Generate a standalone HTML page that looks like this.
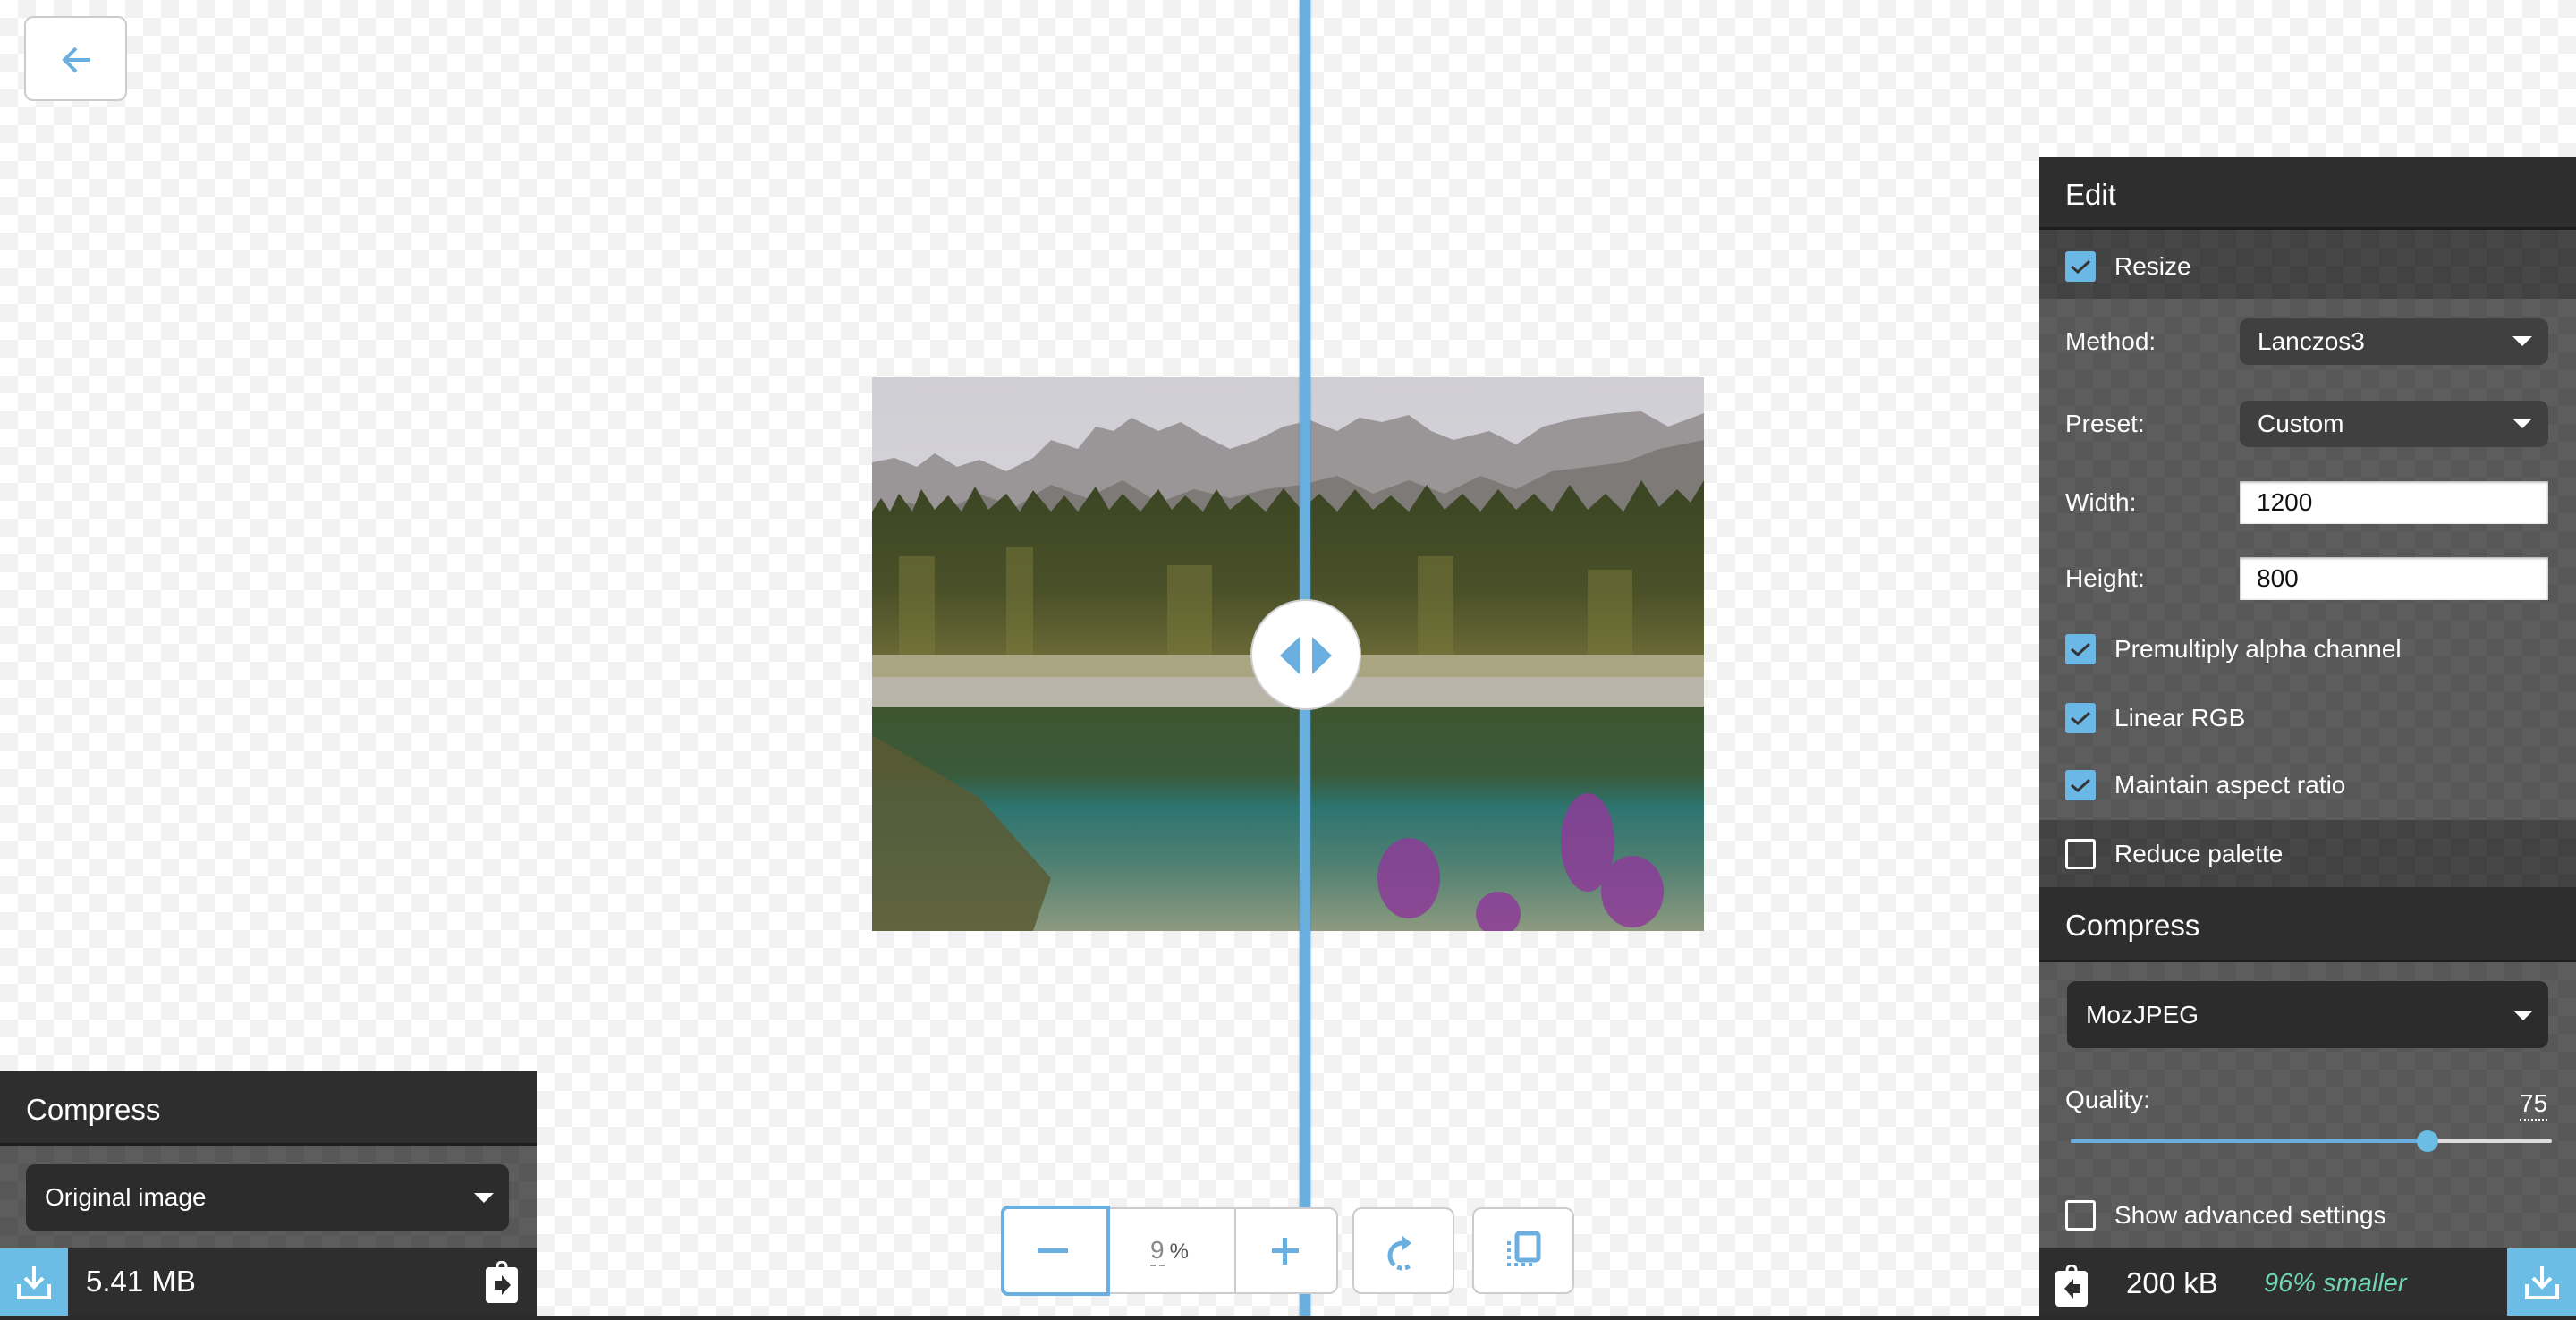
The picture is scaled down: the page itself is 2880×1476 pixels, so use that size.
<!DOCTYPE html>
<html><head><meta charset="utf-8"><style>
*{box-sizing:border-box;margin:0;padding:0}
body{width:2880px;height:1476px;overflow:hidden;position:relative;font-family:"Liberation Sans",sans-serif;
background:repeating-conic-gradient(#f2f2f2 0 25%,#fff 0 50%) 0 0/40px 40px;}
.abs{position:absolute}
.btn{position:absolute;background:#fff;border:2px solid #ccc;border-radius:10px}
.panel{position:absolute;color:#fff}
.hdr{background:#2e2e2e;border-bottom:3px solid #1e1e1e;font-size:33px;position:absolute;left:0;right:0}
.light{position:absolute;left:0;right:0;background:repeating-conic-gradient(#5d5d5d 0 25%,#575757 0 50%) 0 0/40px 40px}
.dark{position:absolute;left:0;right:0;background:repeating-conic-gradient(#474747 0 25%,#424242 0 50%) 0 0/40px 40px}
.t{position:absolute;font-size:28px;line-height:1;white-space:nowrap}
.cb{position:absolute;width:34px;height:34px;border-radius:3px;background:#6bb8e6}
.cb svg{position:absolute;left:5px;top:8px}
.cbo{position:absolute;width:34px;height:34px;border:3px solid #fff;border-radius:3px}
.sel{position:absolute;border-radius:10px}
.arr{position:absolute;width:0;height:0;border-left:11px solid transparent;border-right:11px solid transparent;border-top:11px solid #fff}
.inp{position:absolute;background:#fff;box-shadow:inset 0 1px 3px #999;color:#111}
</style></head><body>

<div class="btn" style="left:27px;top:18px;width:115px;height:95px">
<svg class="abs" style="left:40px;top:30px" width="34" height="34" viewBox="0 0 34 34"><path d="M32 17H3M16 4L3 17l13 13" fill="none" stroke="#6aafdf" stroke-width="4"/></svg></div>

<!-- image -->
<svg class="abs" style="left:975px;top:422px" width="930" height="619" viewBox="0 0 930 619">
<defs>
<linearGradient id="sky" x1="0" y1="0" x2="0" y2="1"><stop offset="0" stop-color="#cfced4"/><stop offset="1" stop-color="#e4e2e6"/></linearGradient>
<linearGradient id="wat" x1="0" y1="0" x2="0" y2="1"><stop offset="0" stop-color="#3e5530"/><stop offset=".3" stop-color="#3a5a3a"/><stop offset=".45" stop-color="#2d7470"/><stop offset=".7" stop-color="#4f8072"/><stop offset="1" stop-color="#8d9a80"/></linearGradient>
<linearGradient id="for" x1="0" y1="0" x2="0" y2="1"><stop offset="0" stop-color="#3a4524"/><stop offset=".6" stop-color="#4a5028"/><stop offset="1" stop-color="#6e6c38"/></linearGradient>
</defs>
<rect width="930" height="619" fill="url(#sky)"/>
<path d="M0 95 L25 90 50 100 70 85 95 100 120 92 150 105 180 90 200 70 230 80 250 55 270 60 290 45 320 60 345 50 370 65 400 80 430 70 460 55 490 48 520 60 545 45 570 50 600 42 625 60 650 70 690 60 720 75 750 55 790 45 830 40 860 38 890 55 930 40 L930 220 L0 220Z" fill="#9a9596"/>
<path d="M0 160 L40 140 80 150 120 130 160 145 200 120 240 135 280 115 320 140 360 125 400 135 440 125 480 120 520 110 560 130 600 115 640 130 680 110 720 125 760 105 800 100 840 95 880 80 930 70 L930 220 L0 220Z" fill="#7d7a78"/>
<path d="M0 150 L10 135 20 150 30 130 45 150 55 125 70 148 85 132 100 150 115 122 130 148 150 130 165 150 180 126 200 150 215 132 230 150 250 122 265 148 280 130 300 150 320 125 335 148 350 132 370 150 385 125 400 148 420 132 440 150 460 124 480 148 500 130 520 150 540 125 560 148 580 132 600 150 620 120 640 148 660 130 680 150 700 125 720 148 740 130 760 150 780 120 800 148 820 130 840 150 860 115 880 145 900 125 915 140 930 115 L930 320 L0 320Z" fill="url(#for)"/>
<g fill="#7a7a3a" opacity=".5"><rect x="30" y="200" width="40" height="110"/><rect x="150" y="190" width="30" height="120"/><rect x="330" y="210" width="50" height="100"/><rect x="610" y="200" width="40" height="110"/><rect x="800" y="215" width="50" height="95"/></g>
<rect x="0" y="310" width="930" height="30" fill="#a9a582"/>
<rect x="0" y="335" width="930" height="35" fill="#b8b5a8"/>
<rect x="0" y="368" width="930" height="251" fill="url(#wat)"/>
<path d="M0 400 L120 470 200 560 180 619 0 619Z" fill="#5a5a34" opacity=".85"/>
<g fill="#8d3c98" opacity=".85"><ellipse cx="600" cy="560" rx="35" ry="45"/><ellipse cx="800" cy="520" rx="30" ry="55"/><ellipse cx="850" cy="575" rx="35" ry="40"/><ellipse cx="700" cy="600" rx="25" ry="25"/></g>
</svg>

<!-- divider -->
<div class="abs" style="left:1453px;top:0;width:12px;height:1476px;background:#68aede;box-shadow:0 0 2px #4a8ec0"></div>
<div class="abs" style="left:1398px;top:670px;width:124px;height:124px;border-radius:50%;background:#fff;border:2px solid #ccc">
<svg class="abs" style="left:27px;top:28px" width="68" height="66" viewBox="0 0 68 66"><path d="M22 0V42L0 21Z M36 0V42L58 21Z" fill="#6aafdf" transform="translate(4 12)"/></svg></div>

<!-- zoom controls -->
<div class="btn" style="left:1121px;top:1350px;width:375px;height:97px"></div>
<div class="abs" style="left:1119px;top:1348px;width:122px;height:101px;border:4px solid #6aafdf;border-radius:8px 0 0 8px;background:#fff"></div>
<div class="abs" style="left:1160px;top:1396px;width:34px;height:5px;background:#6aafdf"></div>
<div class="abs" style="left:1380px;top:1352px;width:2px;height:93px;background:#ccc"></div>
<div class="abs" style="left:1286px;top:1382px;font-size:28px;color:#888">9<span style="color:#555;font-size:24px;margin-left:6px">%</span></div>
<div class="abs" style="left:1286px;top:1414px;width:16px;border-top:2px dashed #999"></div>
<div class="abs" style="left:1422px;top:1396px;width:30px;height:5px;background:#6aafdf"></div>
<div class="abs" style="left:1434px;top:1384px;width:5px;height:30px;background:#6aafdf"></div>
<div class="btn" style="left:1512px;top:1350px;width:114px;height:97px">
<svg class="abs" style="left:36px;top:26px" width="40" height="44" viewBox="0 0 40 44"><path d="M18 12A14 14 0 1 0 32 26" fill="none" stroke="#6aafdf" stroke-width="5" stroke-dasharray="34 4 5 4 5"/><path d="M18 4L28 12 18 20Z" fill="#6aafdf"/></svg></div>
<div class="btn" style="left:1646px;top:1350px;width:114px;height:97px">
<svg class="abs" style="left:36px;top:24px" width="40" height="44" viewBox="0 0 40 44"><rect x="12" y="3" width="24" height="30" rx="3" fill="none" stroke="#6aafdf" stroke-width="5"/><path d="M3 12V38H30" fill="none" stroke="#6aafdf" stroke-width="4" stroke-dasharray="4 4"/></svg></div>

<!-- bottom line -->
<div class="abs" style="left:0;top:1471px;width:2880px;height:5px;background:#2a2a2a"></div>

<!-- left panel -->
<div class="panel" style="left:0;top:1198px;width:600px;height:273px">
<div class="hdr" style="top:0;height:83px"><span class="abs" style="left:29px;top:24px">Compress</span></div>
<div class="light" style="top:83px;height:115px"></div>
<div class="sel" style="left:29px;top:104px;width:540px;height:74px;background:#2c2c2c"><span class="t" style="left:21px;top:23px">Original image</span><div class="arr" style="right:17px;top:32px"></div></div>
<div class="abs" style="left:0;top:198px;width:600px;height:75px;background:#2e2e2e"></div>
<div class="abs" style="left:0;top:198px;width:76px;height:75px;background:#6bbde6">
<svg class="abs" style="left:18px;top:18px" width="40" height="40" viewBox="0 0 40 40"><path d="M20 2V24M10 15l10 10 10-10" fill="none" stroke="#fff" stroke-width="4"/><path d="M3 22V37H37V22" fill="none" stroke="#fff" stroke-width="4"/></svg></div>
<span class="t" style="left:96px;top:218px;font-size:33px">5.41 MB</span>
<svg class="abs" style="left:543px;top:212px" width="36" height="48" viewBox="0 0 36 48"><rect x="0" y="7" width="36" height="40" rx="4" fill="#fff"/><circle cx="18" cy="6" r="5" fill="none" stroke="#fff" stroke-width="3"/><path d="M10 22h8v-6l10 11-10 11v-6h-8Z" fill="#2e2e2e"/></svg>
</div>

<!-- right panel -->
<div class="panel" style="left:2280px;top:176px;width:600px;height:1295px">
<div class="hdr" style="top:0;height:81px"><span class="abs" style="left:29px;top:23px">Edit</span></div>
<div class="dark" style="top:81px;height:77px"></div>
<div class="cb" style="left:29px;top:105px"><svg width="24" height="18" viewBox="0 0 24 18"><path d="M2 9l7 6L22 3" fill="none" stroke="#333" stroke-width="3"/></svg></div>
<span class="t" style="left:84px;top:108px">Resize</span>
<div class="light" style="top:158px;height:583px"></div>
<span class="t" style="left:29px;top:192px">Method:</span>
<div class="sel" style="left:224px;top:180px;width:345px;height:52px;background:#404040"><span class="t" style="left:20px;top:12px">Lanczos3</span><div class="arr" style="right:18px;top:20px"></div></div>
<span class="t" style="left:29px;top:284px">Preset:</span>
<div class="sel" style="left:224px;top:272px;width:345px;height:52px;background:#404040"><span class="t" style="left:20px;top:12px">Custom</span><div class="arr" style="right:18px;top:20px"></div></div>
<span class="t" style="left:29px;top:372px">Width:</span>
<div class="inp" style="left:224px;top:362px;width:345px;height:48px"><span class="t" style="left:19px;top:10px">1200</span></div>
<span class="t" style="left:29px;top:457px">Height:</span>
<div class="inp" style="left:224px;top:447px;width:345px;height:48px"><span class="t" style="left:19px;top:10px">800</span></div>
<div class="cb" style="left:29px;top:533px"><svg width="24" height="18" viewBox="0 0 24 18"><path d="M2 9l7 6L22 3" fill="none" stroke="#333" stroke-width="3"/></svg></div>
<span class="t" style="left:84px;top:536px">Premultiply alpha channel</span>
<div class="cb" style="left:29px;top:610px"><svg width="24" height="18" viewBox="0 0 24 18"><path d="M2 9l7 6L22 3" fill="none" stroke="#333" stroke-width="3"/></svg></div>
<span class="t" style="left:84px;top:613px">Linear RGB</span>
<div class="cb" style="left:29px;top:685px"><svg width="24" height="18" viewBox="0 0 24 18"><path d="M2 9l7 6L22 3" fill="none" stroke="#333" stroke-width="3"/></svg></div>
<span class="t" style="left:84px;top:688px">Maintain aspect ratio</span>
<div class="dark" style="top:741px;height:75px"></div>
<div class="cbo" style="left:29px;top:762px"></div>
<span class="t" style="left:84px;top:765px">Reduce palette</span>
<div class="hdr" style="top:816px;height:84px"><span class="abs" style="left:29px;top:24px">Compress</span></div>
<div class="light" style="top:900px;height:320px"></div>
<div class="sel" style="left:31px;top:921px;width:538px;height:75px;background:#2c2c2c"><span class="t" style="left:21px;top:24px">MozJPEG</span><div class="arr" style="right:17px;top:33px"></div></div>
<span class="t" style="left:29px;top:1040px">Quality:</span>
<span class="t" style="left:537px;top:1044px;border-bottom:2px dotted #fff;padding-bottom:3px">75</span>
<div class="abs" style="left:35px;top:1098px;width:538px;height:4px;background:#ddd;border-radius:2px"></div>
<div class="abs" style="left:35px;top:1098px;width:400px;height:4px;background:#6aafdf;border-radius:2px"></div>
<div class="abs" style="left:422px;top:1088px;width:24px;height:24px;border-radius:50%;background:#6bbde6"></div>
<div class="cbo" style="left:29px;top:1166px"></div>
<span class="t" style="left:84px;top:1169px">Show advanced settings</span>
<div class="abs" style="left:0;top:1220px;width:600px;height:75px;background:#2e2e2e"></div>
<svg class="abs" style="left:18px;top:1238px" width="36" height="48" viewBox="0 0 36 48"><rect x="0" y="7" width="36" height="40" rx="4" fill="#fff"/><circle cx="18" cy="6" r="5" fill="none" stroke="#fff" stroke-width="3"/><path d="M28 22h-8v-6l-10 11 10 11v-6h8Z" fill="#2e2e2e"/></svg>
<span class="t" style="left:97px;top:1242px;font-size:33px">200 kB</span>
<span class="t" style="left:251px;top:1245px;font-size:29px;font-style:italic;color:#6fd6b4">96% smaller</span>
<div class="abs" style="left:523px;top:1220px;width:77px;height:75px;background:#6bbde6">
<svg class="abs" style="left:19px;top:18px" width="40" height="40" viewBox="0 0 40 40"><path d="M20 2V24M10 15l10 10 10-10" fill="none" stroke="#fff" stroke-width="4"/><path d="M3 22V37H37V22" fill="none" stroke="#fff" stroke-width="4"/></svg></div>
</div>
</body></html>
